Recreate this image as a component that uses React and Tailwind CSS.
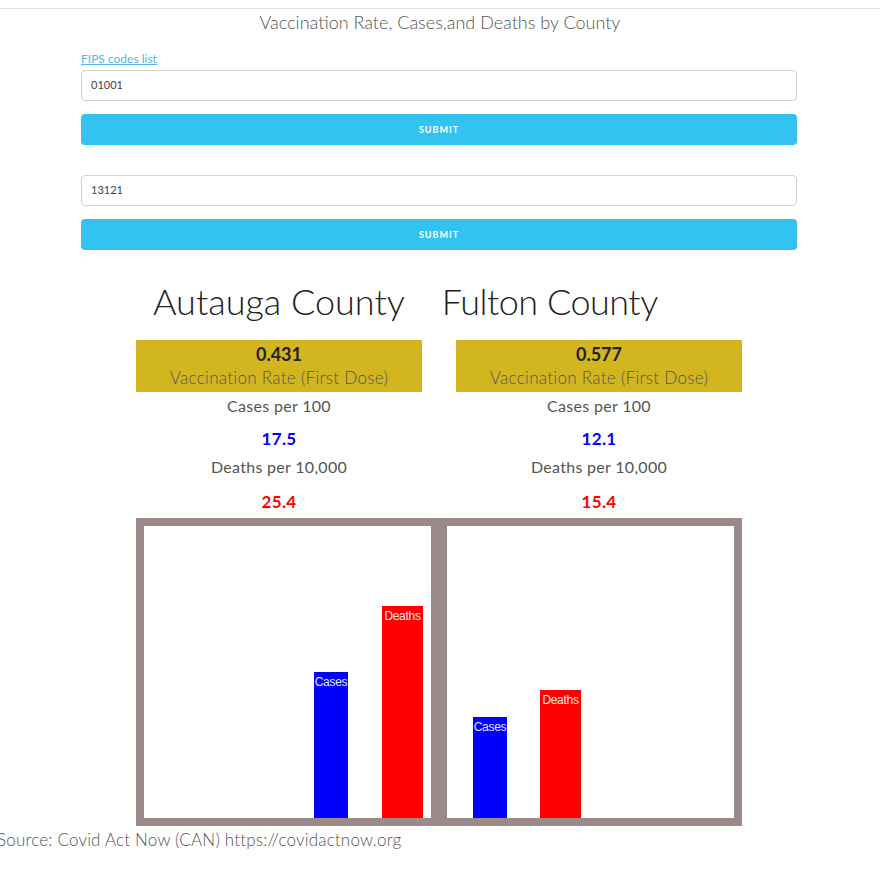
import React from "react";

function Bar({ left, width, top, color, label }) {
  return (
    <div
      className="absolute bottom-0 flex justify-center"
      style={{ left, width, top, backgroundColor: color }}
    >
      <span className="text-[12px] leading-[20px] text-white/90 font-['Liberation_Sans',sans-serif] tracking-[-0.3px] whitespace-nowrap">
        {label}
      </span>
    </div>
  );
}

function Chart({ bars }) {
  return (
    <div className="w-[303px] h-[308px] border-[8px] border-[#9a8a89] bg-white">
      <div className="relative w-full h-full">
        {bars.map((b) => (
          <Bar key={b.label} {...b} />
        ))}
      </div>
    </div>
  );
}

function Stats({ rate, cases, deaths }) {
  return (
    <div className="w-[286px] flex flex-col items-center">
      <div className="w-full h-[52px] bg-[#d3b51f] flex flex-col items-center pt-[3px]">
        <div className="text-[18px] leading-[22px] font-bold text-[#222]">{rate}</div>
        <div className="text-[17px] leading-[26px] font-light text-[#555] tracking-[0.3px]">
          Vaccination Rate (First Dose)
        </div>
      </div>
      <div className="text-[16px] leading-[28px] text-[#555] tracking-[0.3px]">Cases per 100</div>
      <div className="text-[17px] leading-[24px] font-bold text-[#0000ff] mt-[7px] tracking-[0.3px]">{cases}</div>
      <div className="text-[16px] leading-[28px] text-[#555] mt-[2px] tracking-[0.3px]">Deaths per 10,000</div>
      <div className="text-[17px] leading-[24px] font-bold text-[#ff0000] mt-[9px] tracking-[0.3px]">{deaths}</div>
    </div>
  );
}

export default function App() {
  return (
    <div className="w-[880px] min-h-[886px] bg-white font-['Lato',sans-serif] text-[#555] overflow-hidden">
      <div className="mt-[8px] border-t border-[#e1e1e1]" />
      <div className="text-center text-[18px] leading-[26px] font-light text-[#555]">
        Vaccination Rate, Cases,and Deaths by County
      </div>

      <div className="ml-[81px] w-[716px]">
        <a href="#" className="block mt-[17px] text-[12px] leading-[14px] text-[#4fb8e6] underline">
          FIPS codes list
        </a>
        <div className="mt-[4px] h-[31px] border border-[#d1d1d1] rounded-[4px] flex items-center px-[9px] text-[11px] text-[#444]">
          01001
        </div>
        <button className="mt-[13px] w-full h-[31px] rounded-[4px] bg-[#33c3f0] text-white text-[9px] font-bold tracking-[1px] flex items-center justify-center">
          SUBMIT
        </button>
        <div className="mt-[30px] h-[31px] border border-[#d1d1d1] rounded-[4px] flex items-center px-[9px] text-[11px] text-[#444]">
          13121
        </div>
        <button className="mt-[13px] w-full h-[31px] rounded-[4px] bg-[#33c3f0] text-white text-[9px] font-bold tracking-[1px] flex items-center justify-center">
          SUBMIT
        </button>
      </div>

      <div className="mt-[29px] flex pl-[153px] gap-[37px] text-[36px] leading-[44px] font-light text-[#222]">
        <div>Autauga County</div>
        <div className="tracking-[-0.5px]">Fulton County</div>
      </div>

      <div className="mt-[17px] ml-[136px] flex gap-[34px]">
        <Stats rate="0.431" cases="17.5" deaths="25.4" />
        <Stats rate="0.577" cases="12.1" deaths="15.4" />
      </div>

      <div className="mt-[4px] ml-[136px] flex">
        <Chart
          bars={[
            { label: "Cases", left: 170, width: 34, top: 146, color: "#0000ff" },
            { label: "Deaths", left: 238, width: 41, top: 80, color: "#ff0000" },
          ]}
        />
        <Chart
          bars={[
            { label: "Cases", left: 26, width: 34, top: 191, color: "#0000ff" },
            { label: "Deaths", left: 93, width: 41, top: 164, color: "#ff0000" },
          ]}
        />
      </div>

      <div className="ml-[-3px] text-[17px] leading-[28px] font-light text-[#555] tracking-[0.2px] whitespace-nowrap">
        Source: Covid Act Now (CAN) https://covidactnow.org
      </div>
    </div>
  );
}
